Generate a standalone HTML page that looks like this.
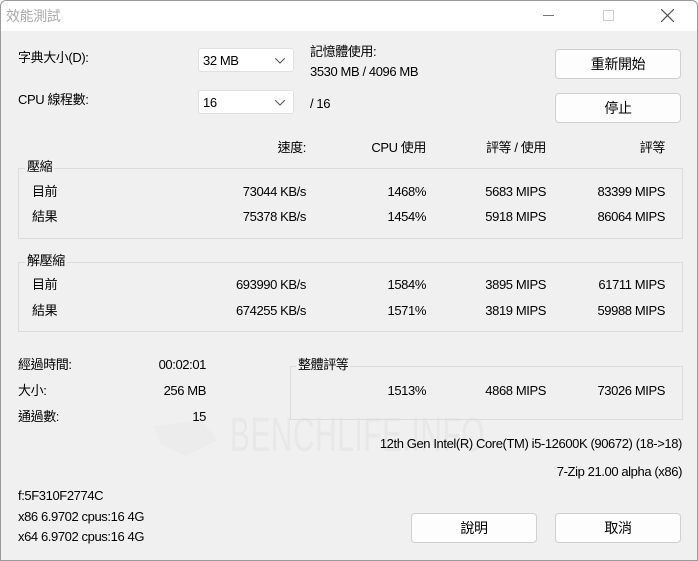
<!DOCTYPE html>
<html><head><meta charset="utf-8"><style>
*{margin:0;padding:0;box-sizing:border-box}
body{width:698px;height:561px;overflow:hidden;background:#fff;font-family:"Liberation Sans","Noto Sans CJK TC",sans-serif;font-size:13px;color:#000;letter-spacing:-0.4px}
#win{position:absolute;left:0;top:0;width:698px;height:561px;background:#f0f0f0;overflow:hidden}
#frame{position:absolute;left:0;top:0;width:698px;height:561px;border:1px solid #9a9a9a;border-radius:6px 6px 0 0;pointer-events:none}
#title{position:absolute;left:0;top:0;width:698px;height:31px;background:#fff}
.a{position:absolute;white-space:nowrap;line-height:16px}
.r{text-align:right}
.box{position:absolute;border:1px solid #dcdcdc}
.btn{position:absolute;background:#fdfdfd;border:1px solid #d0d0d0;border-radius:4px;text-align:center;font-size:14px}
.sel{position:absolute;background:#fff;border:1px solid #e0e0e0;border-radius:3px;height:24px;width:96px;padding:4px 0 0 4px}
.sel svg{position:absolute;right:8px;top:9px}
.lbl{background:#f0f0f0;padding:0 2px}
</style></head><body><div id="win">
<div id="title">
<div class="a" style="left:6px;top:8px;color:#aaa;font-size:14px">效能測試</div>
<div class="a" style="left:543px;top:15px;width:11px;height:1px;background:#777"></div>
<div class="a" style="left:603px;top:10px;width:11px;height:11px;border:1px solid #ccc"></div>
<svg class="a" style="left:661px;top:9px" width="13" height="13"><path d="M0 0L13 13M13 0L0 13" stroke="#555" stroke-width="1.2"/></svg>
</div>
<div class="a" style="left:18px;top:50px">字典大小(D):</div>
<div class="sel" style="left:198px;top:48px">32 MB<svg width="10" height="6"><path d="M0 0L5 5L10 0" fill="none" stroke="#555"/></svg></div>
<div class="a" style="left:18px;top:92px">CPU 線程數:</div>
<div class="sel" style="left:198px;top:90px">16<svg width="10" height="6"><path d="M0 0L5 5L10 0" fill="none" stroke="#555"/></svg></div>
<div class="a" style="left:310px;top:44px">記憶體使用:</div>
<div class="a" style="left:310px;top:64px">3530 MB / 4096 MB</div>
<div class="a" style="left:310px;top:96px">/ 16</div>
<div class="btn" style="left:555px;top:49px;width:126px;height:30px;line-height:28px">重新開始</div>
<div class="btn" style="left:555px;top:93px;width:126px;height:30px;line-height:28px">停止</div>
<div class="a r" style="left:200px;width:106px;top:140px">速度:</div>
<div class="a r" style="left:320px;width:106px;top:140px">CPU 使用</div>
<div class="a r" style="left:440px;width:106px;top:140px">評等 / 使用</div>
<div class="a r" style="left:560px;width:105px;top:140px">評等</div>
<div class="box" style="left:18px;top:168px;width:665px;height:71px"></div>
<div class="a lbl" style="left:25px;top:159px">壓縮</div>
<div class="a" style="left:32px;top:184px">目前</div><div class="a" style="left:32px;top:209px">結果</div>
<div class="a r" style="left:200px;width:106px;top:184px">73044 KB/s</div><div class="a r" style="left:320px;width:106px;top:184px">1468%</div><div class="a r" style="left:440px;width:106px;top:184px">5683 MIPS</div><div class="a r" style="left:560px;width:105px;top:184px">83399 MIPS</div>
<div class="a r" style="left:200px;width:106px;top:209px">75378 KB/s</div><div class="a r" style="left:320px;width:106px;top:209px">1454%</div><div class="a r" style="left:440px;width:106px;top:209px">5918 MIPS</div><div class="a r" style="left:560px;width:105px;top:209px">86064 MIPS</div>
<div class="box" style="left:18px;top:262px;width:665px;height:70px"></div>
<div class="a lbl" style="left:25px;top:253px">解壓縮</div>
<div class="a" style="left:32px;top:277px">目前</div><div class="a" style="left:32px;top:303px">結果</div>
<div class="a r" style="left:200px;width:106px;top:277px">693990 KB/s</div><div class="a r" style="left:320px;width:106px;top:277px">1584%</div><div class="a r" style="left:440px;width:106px;top:277px">3895 MIPS</div><div class="a r" style="left:560px;width:105px;top:277px">61711 MIPS</div>
<div class="a r" style="left:200px;width:106px;top:303px">674255 KB/s</div><div class="a r" style="left:320px;width:106px;top:303px">1571%</div><div class="a r" style="left:440px;width:106px;top:303px">3819 MIPS</div><div class="a r" style="left:560px;width:105px;top:303px">59988 MIPS</div>
<div class="a" style="left:230px;top:410px;font-size:48px;line-height:52px;color:#e8e8e8;letter-spacing:1px;transform:scaleX(0.62);transform-origin:left">BENCHLIFE.INFO</div>
<svg class="a" style="left:150px;top:418px" width="72" height="40"><path d="M4 8L50 2L68 22L36 38L10 26Z" fill="#ececec"/></svg>
<div class="a" style="left:18px;top:357px">經過時間:</div><div class="a r" style="left:100px;width:106px;top:357px">00:02:01</div>
<div class="a" style="left:18px;top:383px">大小:</div><div class="a r" style="left:100px;width:106px;top:383px">256 MB</div>
<div class="a" style="left:18px;top:409px">通過數:</div><div class="a r" style="left:100px;width:106px;top:409px">15</div>
<div class="box" style="left:290px;top:366px;width:393px;height:54px"></div>
<div class="a lbl" style="left:296px;top:357px">整體評等</div>
<div class="a r" style="left:320px;width:106px;top:383px">1513%</div><div class="a r" style="left:440px;width:106px;top:383px">4868 MIPS</div><div class="a r" style="left:560px;width:105px;top:383px">73026 MIPS</div>
<div class="a r" style="left:300px;width:382px;top:436px">12th Gen Intel(R) Core(TM) i5-12600K (90672) (18-&gt;18)</div>
<div class="a r" style="left:300px;width:382px;top:464px">7-Zip 21.00 alpha (x86)</div>
<div class="a" style="left:18px;top:488px">f:5F310F2774C</div>
<div class="a" style="left:18px;top:509px">x86 6.9702 cpus:16 4G</div>
<div class="a" style="left:18px;top:529px">x64 6.9702 cpus:16 4G</div>
<div class="btn" style="left:411px;top:513px;width:126px;height:30px;line-height:28px">說明</div>
<div class="btn" style="left:555px;top:513px;width:126px;height:30px;line-height:28px">取消</div>
</div><div id="frame"></div></body></html>
